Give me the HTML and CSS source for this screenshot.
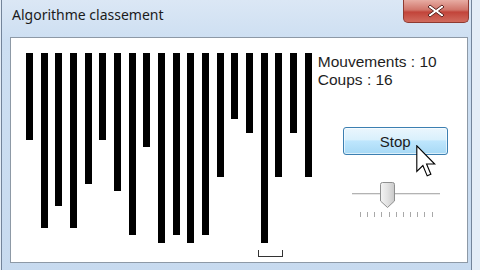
FILE: index.html
```html
<!DOCTYPE html>
<html lang="fr">
<head>
  <meta charset="UTF-8">
  <title>Algorithme classement</title>
  <meta name="viewport" content="width=device-width, initial-scale=1.0">
  <link rel="stylesheet" href="styles.css">
</head>
<body>

  <div class="window">
    <!-- Title bar -->
    <div class="titlebar">
      <span class="title">Algorithme classement</span>
      <div class="close-btn">
        <svg width="18" height="14" viewBox="0 0 18 14">
          <path d="M3 1 L9 5.5 L15 1 L17 3 L11.5 7 L17 11 L15 13 L9 8.5 L3 13 L1 11 L6.5 7 L1 3 Z" fill="#ffffff" stroke="#5a2420" stroke-width="1" stroke-linejoin="round"/>
        </svg>
      </div>
    </div>

    <!-- Client area -->
    <div class="client">
      <div class="bars">
        <div class="bar" style="height:87px"></div>
        <div class="bar" style="height:175px"></div>
        <div class="bar" style="height:153px"></div>
        <div class="bar" style="height:175px"></div>
        <div class="bar" style="height:131px"></div>
        <div class="bar" style="height:87px"></div>
        <div class="bar" style="height:138px"></div>
        <div class="bar" style="height:182px"></div>
        <div class="bar" style="height:94px"></div>
        <div class="bar" style="height:190px"></div>
        <div class="bar" style="height:182px"></div>
        <div class="bar" style="height:190px"></div>
        <div class="bar" style="height:182px"></div>
        <div class="bar" style="height:124px"></div>
        <div class="bar" style="height:66px"></div>
        <div class="bar" style="height:80px"></div>
        <div class="bar" style="height:190px"></div>
        <div class="bar" style="height:124px"></div>
        <div class="bar" style="height:80px"></div>
        <div class="bar" style="height:124px"></div>
        <div class="marker"></div>
      </div>

      <div class="panel">
        <div class="stats">
          <div>Mouvements : 10</div>
          <div>Coups : 16</div>
        </div>
        <button class="stop-btn">Stop</button>
        <div class="slider">
          <div class="track"></div>
          <svg class="thumb" width="15" height="26" viewBox="0 0 15 26">
            <defs>
              <linearGradient id="thumbGrad" x1="0" y1="0" x2="1" y2="0">
                <stop offset="0" stop-color="#f4f4f4"/>
                <stop offset="0.5" stop-color="#e2e2e2"/>
                <stop offset="1" stop-color="#c9c9c9"/>
              </linearGradient>
            </defs>
            <path d="M2.5 0.5 H12.5 Q14.5 0.5 14.5 2.5 V19 L7.5 25.5 L0.5 19 V2.5 Q0.5 0.5 2.5 0.5 Z" fill="url(#thumbGrad)" stroke="#8e8f8f"/>
          </svg>
          <div class="ticks">
            <span></span><span></span><span></span><span></span><span></span>
            <span></span><span></span><span></span><span></span><span></span>
            <span></span>
          </div>
        </div>
      </div>
    </div>

    <!-- Mouse pointer over the Stop button -->
    <svg class="cursor" width="20" height="32" viewBox="0 0 12.5 20">
      <path d="M0.5 0.5 V16.5 L4.3 12.8 L7 19.3 L9.3 18.3 L6.6 11.9 H11.7 Z" fill="#ffffff" stroke="#000000" stroke-width="0.7" stroke-linejoin="miter"/>
    </svg>
  </div>

</body>
</html>
```

FILE: styles.css
```css
body {
  margin: 0;
  background-color: #e4edf7;
  font-family: "Liberation Sans", Arial, sans-serif;
  overflow: hidden;
  height: 270px;
}

.window {
  position: relative;
  width: 469px;
  height: 280px;
  margin-left: 1px;
  border: 1px solid #73849a;
  border-top: none;
  background: linear-gradient(#dbe7f5, #cddff2 40px, #c7daef);
}

/* Title bar */
.titlebar {
  height: 37px;
  display: flex;
  justify-content: space-between;
  align-items: flex-start;
}

.title {
  margin-left: 10px;
  margin-top: 5px;
  font-family: "Noto Sans", "Open Sans", sans-serif;
  font-size: 14px;
  color: #1b1b1b;
}

.close-btn {
  width: 64px;
  height: 22px;
  margin-right: 2px;
  border: 1px solid #8e3a31;
  border-top: none;
  border-radius: 0 0 5px 5px;
  background: linear-gradient(#e7aca3, #d0756a 45%, #c2443a 55%, #d16b5e);
  display: flex;
  align-items: center;
  justify-content: center;
}

/* Client area */
.client {
  margin-left: 8px;
  margin-right: 3px;
  border: 1px solid #8d99a6;
  background-color: #ffffff;
  display: flex;
  padding: 15px 0 0 15px;
  height: 209px;
}

.bars {
  position: relative;
  display: flex;
  align-items: flex-start;
  gap: 7.68px;
  height: 209px;
}

.bar {
  width: 7px;
  background-color: #000000;
}

.marker {
  position: absolute;
  left: 232px;
  top: 197px;
  width: 23px;
  height: 6px;
  border: 1px solid #333333;
  border-top: none;
}

/* Right panel */
.panel {
  margin-left: 6px;
  display: flex;
  flex-direction: column;
  align-items: flex-start;
}

.stats {
  font-size: 15.5px;
  line-height: 18px;
  color: #1e1e1e;
}

.stop-btn {
  margin-top: 38px;
  margin-left: 25px;
  width: 105px;
  height: 28px;
  border: 1px solid #3c7fb1;
  border-radius: 3px;
  background: linear-gradient(#eaf6fd, #d9f0fc 45%, #bee6fd 50%, #a7d9f5);
  box-shadow: inset 0 0 0 1px rgba(255, 255, 255, 0.6);
  font-family: "Liberation Sans", Arial, sans-serif;
  font-size: 15px;
  color: #1b1b1b;
  padding: 0;
}

.slider {
  position: relative;
  margin-top: 27px;
  margin-left: 34px;
  width: 88px;
  height: 38px;
}

.track {
  margin-top: 11px;
  height: 1px;
  background-color: #b3b3b3;
  border-bottom: 1px solid #e8e8e8;
}

.thumb {
  position: absolute;
  left: 28px;
  top: 0;
}

.ticks {
  display: flex;
  justify-content: space-between;
  margin-top: 17px;
  padding: 0 7px 0 8px;
}

.ticks span {
  width: 1px;
  height: 5px;
  background-color: #a8a8a8;
}

.cursor {
  position: absolute;
  left: 414px;
  top: 145px;
}
```
